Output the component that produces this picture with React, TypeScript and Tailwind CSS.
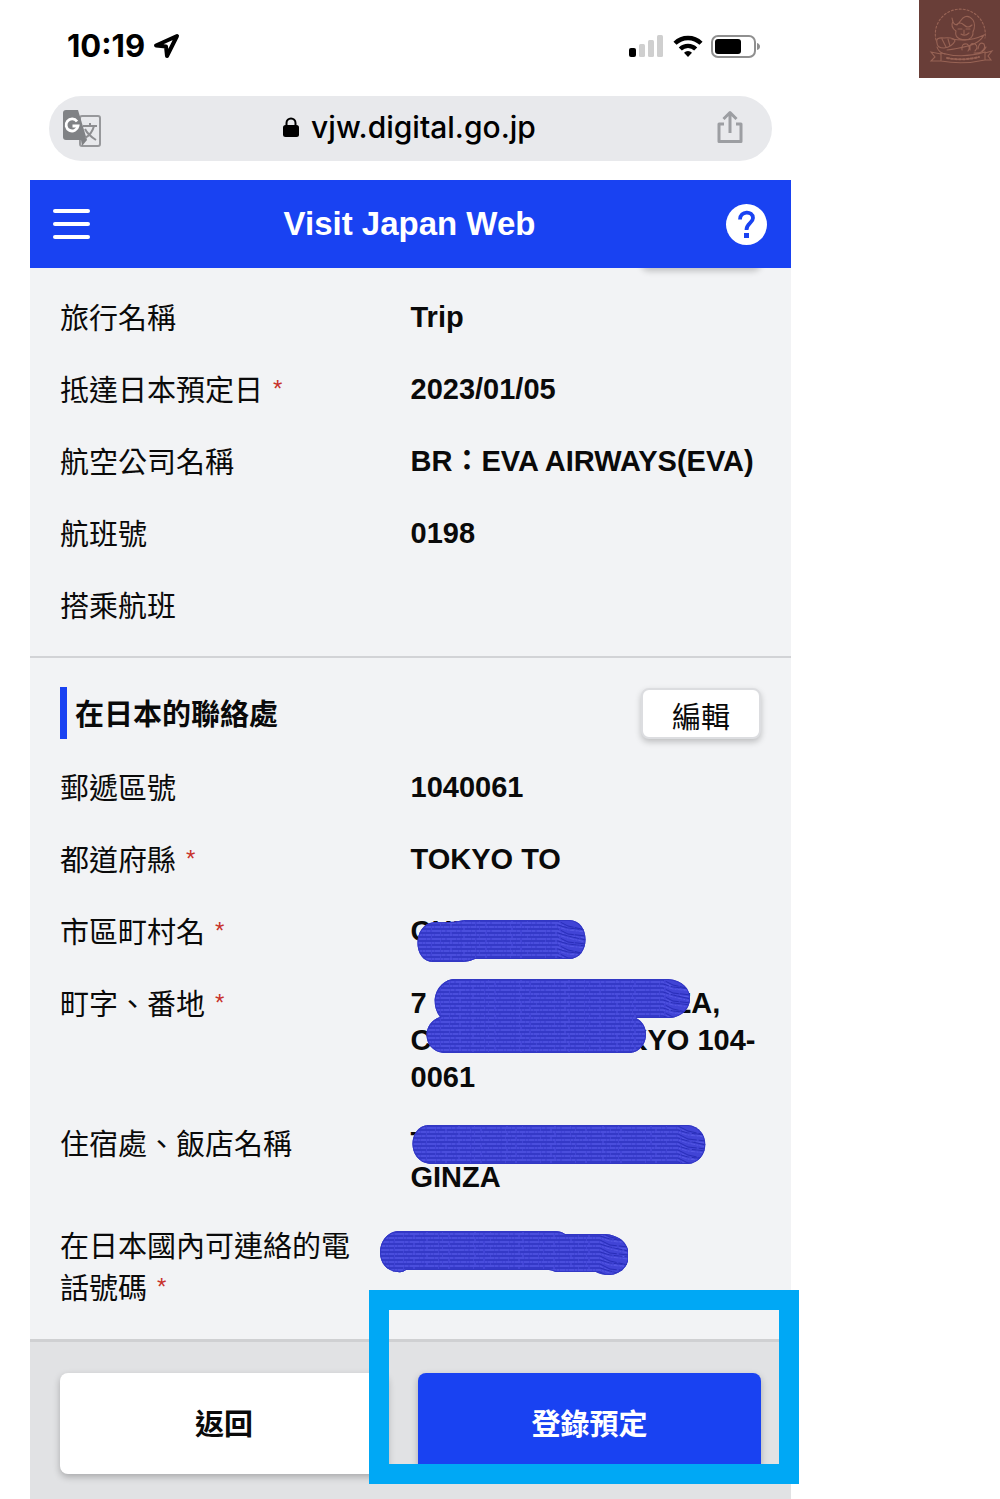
import { useId, type ReactNode } from "react";

function Required() {
  return <span className="ml-[10px] align-[4px] font-['Liberation_Sans'] text-2xl leading-none text-[#c8322b]">*</span>;
}

type StrokeProps = { d: string; width: number; height: number; className: string };

/* A marker stroke with a ribbed texture that hides private data. */
function Scribble({ d, width, height, className }: StrokeProps) {
  const id = useId();
  const rows = Array.from({ length: Math.ceil(height / 4) }, (_, i) => i * 4 + 2);
  return (
    <svg className={`absolute ${className}`} width={width} height={height} viewBox={`0 0 ${width} ${height}`} aria-hidden="true">
      <defs>
        <clipPath id={id}>
          <path d={d} />
        </clipPath>
      </defs>
      <path d={d} fill="#4144d6" />
      <g clipPath={`url(#${id})`} fill="none" strokeWidth="1">
        {rows.map((y, i) => {
          const bend = width - 28;
          const line = `M0 ${y}H${bend}l10 ${i % 2 ? 3 : 5}l18 ${i % 3 ? 2 : 4}`;
          return (
            <g key={y}>
              <path d={line} stroke="#292eb8" strokeDasharray={i % 2 ? "23 1 9 2" : "14 1 31 2"} />
              <path d={line} transform="translate(0 2)" stroke="#5558e4" strokeDasharray={i % 2 ? "5 1 2 1" : "9 1 3 2"} />
            </g>
          );
        })}
        <path d={d} stroke="#3237c4" strokeWidth="2" />
      </g>
    </svg>
  );
}

type RowProps = { label: string; required?: boolean; children?: ReactNode; className?: string; lines?: string };

function Row({ label, required, children, className = "mb-8", lines = "leading-[37px]" }: RowProps) {
  return (
    <div className={`grid grid-cols-2 items-start ${className}`}>
      <dt className="leading-10">
        {label}
        {required && <Required />}
      </dt>
      <dd className={`relative font-bold whitespace-nowrap ${lines}`}>{children}</dd>
    </div>
  );
}

function StatusBar() {
  return (
    <div className="flex h-24 items-start justify-between pt-7 pr-[30px] pl-[37px] text-black">
      <div className="flex items-center gap-2 font-[Inter] text-[31px] leading-9 font-bold">
        <time>10:19</time>
        <svg width="27" height="26" viewBox="0 0 27 26" fill="none" stroke="black" strokeWidth="4" strokeLinejoin="round" aria-hidden="true">
          <path d="M24 3 3 12.5 13 13.5 14 23Z" />
        </svg>
      </div>
      <div className="flex h-9 items-center gap-2">
        <svg width="36" height="22" viewBox="0 0 36 22" aria-hidden="true">
          <rect x="0" y="13" width="7" height="9" rx="2" fill="black" />
          <rect x="10" y="9" width="6" height="13" rx="1.5" fill="#cfcfcf" />
          <rect x="19" y="5" width="6" height="17" rx="1.5" fill="#cfcfcf" />
          <rect x="28" y="0" width="6" height="22" rx="1.5" fill="#cfcfcf" />
        </svg>
        <svg width="30" height="22" viewBox="0 0 30 22" fill="none" stroke="black" strokeWidth="4.4" aria-hidden="true">
          <path d="M2 8.3a18.5 18.5 0 0 1 26 0" />
          <path d="M7.3 14a11 11 0 0 1 15.4 0" />
          <path d="M11 17.7a5.7 5.7 0 0 1 8 0L15 22Z" fill="black" stroke="none" />
        </svg>
        <svg width="50" height="23" viewBox="0 0 50 23" aria-hidden="true">
          <rect x="1" y="1" width="43" height="21" rx="6" fill="none" stroke="#8f8f8f" strokeWidth="2" />
          <rect x="4" y="4" width="26" height="15" rx="3" fill="black" />
          <path d="M46 8q3 1 3 3.5T46 15Z" fill="#8f8f8f" />
        </svg>
      </div>
    </div>
  );
}

function AddressBar() {
  return (
    <div className="mr-[19px] ml-[19px] flex h-[65px] items-center justify-between rounded-full bg-[#e8e9ec] pr-[28px] pl-[14px]">
      <button type="button" aria-label="Translate">
        <svg width="40" height="40" viewBox="0 0 40 40" aria-hidden="true">
          <rect x="17" y="7" width="20" height="30" rx="2" fill="#e8e9ec" stroke="#97989b" strokeWidth="2" />
          <path d="M3 1H15L24 31H3Q0 31 0 28V4Q0 1 3 1Z" fill="#808285" />
          <path d="M18 31H24L19 37Z" fill="#808285" />
          <path d="M14 12.5A6 6 0 1 0 15 17H9.5" fill="none" stroke="white" strokeWidth="2.8" />
          <g fill="none" stroke="#8d8e91" strokeWidth="2">
            <path d="M20 17H34M27 14V17M31 17Q29 25 22 29M22 20Q25 26 33 31" />
          </g>
        </svg>
      </button>
      <div className="flex items-center gap-3 pb-1 font-[Inter] text-[30px] leading-9 font-medium text-black">
        <svg width="16" height="20" viewBox="0 0 16 20" aria-hidden="true">
          <rect x="0" y="8" width="16" height="12" rx="2.5" fill="black" />
          <path d="M3.500 9V6a4.500 4.500 0 0 1 9 0V9" fill="none" stroke="black" strokeWidth="2" />
        </svg>
        <span>vjw.digital.go.jp</span>
      </div>
      <button type="button" aria-label="Share" className="pb-1">
        <svg width="28" height="34" viewBox="0 0 28 34" fill="none" stroke="#9c9ea2" strokeWidth="3" strokeLinejoin="round" aria-hidden="true">
          <path d="M8 14H3V31.500H25V14H20M14 23V3M7.500 9 14 2.500 20.500 9" />
        </svg>
      </button>
    </div>
  );
}

function Emblem() {
  return (
    <svg className="absolute top-0 right-0" width="81" height="78" viewBox="0 0 81 78" role="img" aria-label="Bakery emblem">
      <rect width="81" height="78" fill="#693e38" />
      <g fill="none" stroke="#a8705f" strokeWidth="1.100" strokeLinecap="round" opacity="0.75">
        <path d="M17 40A25 25 0 1 1 66 38" strokeDasharray="2 2" />
        <path d="M33 18Q34 25 38 25L44 18Q49 14 54 20Q57 25 54 32M34 21Q31 27 37 31M37 25Q41 21 45 25T53 25M37 31Q35 39 46 40Q55 39 54 31M39 29H43M47 29H51M42 34Q46 37 50 33M45 30V34" />
        <path d="M18 43Q16 37 25 38Q35 37 36 41Q33 47 25 48Q18 48 18 43ZM23 39 27 47M29 39 31 46" />
        <path d="M33 39Q51 42 65 35Q61 43 49 46Q37 49 28 50M43 50Q42 43 48 44Q52 47 49 51M51 50Q50 42 56 44Q60 47 56 51M59 49Q60 41 65 44Q67 48 63 51M18 47Q19 52 26 54M55 53Q64 54 67 47" />
        <path d="M22 53Q44 59 66 52V60Q44 65 22 61ZM22 54 12 52 16 57 12 61 22 61M66 53 73 51 69 56 72 60 66 60" />
        <path d="M28 58Q44 61 60 57" strokeWidth="2" strokeDasharray="2 2" />
      </g>
    </svg>
  );
}

export default function App() {
  return (
    <div className="relative min-h-screen overflow-hidden bg-white font-['Liberation_Sans','Noto_Sans_CJK_TC',sans-serif]">
      <Emblem />
      <div className="mr-[209px] ml-[30px] text-[29px] text-[#0a0a0a]">
        <StatusBar />
        <AddressBar />
        <header className="mt-[19px] flex h-[88px] items-center justify-between bg-[#1942f2] pr-6 pl-[23px] text-white">
          <button type="button" aria-label="Menu" className="flex w-10 flex-col gap-[9px]">
            <span className="h-1 w-[37px] rounded-full bg-white" />
            <span className="h-1 w-[37px] rounded-full bg-white" />
            <span className="h-1 w-[37px] rounded-full bg-white" />
          </button>
          <h1 className="text-[33px] leading-10 font-bold">Visit Japan Web</h1>
          <button type="button" aria-label="Help">
            <svg width="41" height="41" viewBox="0 0 41 41" aria-hidden="true">
              <circle cx="20.500" cy="20.500" r="20.500" fill="white" />
              <path d="M14 15.500C14 6.500 27 6.500 27 14C27 19 20.500 19 20.500 26" fill="none" stroke="#1942f2" strokeWidth="3.800" />
              <rect x="18" y="29" width="5" height="5" fill="#1942f2" />
            </svg>
          </button>
        </header>

        <main className="bg-[#f2f3f5]">
          <div className="h-[31px] overflow-hidden">
            <div className="-mt-10 mr-[30px] ml-auto h-10 w-[120px] rounded-lg bg-white shadow-[0_3px_6px_rgba(0,0,0,0.22)]" />
          </div>
          <dl className="border-b-2 border-[#d2d3d6] px-[30px] pb-[29px]">
            <Row label="旅行名稱">Trip</Row>
            <Row label="抵達日本預定日" required>2023/01/05</Row>
            <Row label="航空公司名稱">BR：EVA AIRWAYS(EVA)</Row>
            <Row label="航班號">0198</Row>
            <Row label="搭乘航班" className="" />
          </dl>

          <section className="px-[30px] pt-[29px]">
            <div className="mb-[30px] flex items-center justify-between">
              <h2 className="border-l-[7px] border-[#1942f2] pt-1 pl-2 leading-[48px] font-bold">在日本的聯絡處</h2>
              <button type="button" className="h-[51px] w-[120px] rounded-lg border-2 border-[#dcdde0] bg-white pt-2 leading-10 shadow-[0_3px_6px_rgba(0,0,0,0.22)]">
                編輯
              </button>
            </div>
            <dl>
              <Row label="郵遞區號">1040061</Row>
              <Row label="都道府縣" required>TOKYO TO</Row>
              <Row label="市區町村名" required>
                CHUO
                <Scribble
                  className="top-[6px] left-[6px]"
                  width={169}
                  height={44}
                  d="M18 3Q34 4 48 1H152C174 1 174 40 152 40H58Q52 43 46 43H16C-5 43-5 4 18 3Z"
                />
              </Row>
              <Row label="町字、番地" required className="mb-[29px]">
                <div className="flex">
                  <span className="w-[263px]">7</span>
                  <span>ZA,</span>
                </div>
                <div className="flex">
                  <span className="w-[216px]">C</span>
                  <span>KYO 104-</span>
                </div>
                <div>0061</div>
                <Scribble
                  className="-top-[7px] left-[15px]"
                  width={265}
                  height={77}
                  d="M28 1H242C272 3 270 38 244 40H210C226 48 222 73 204 75H18C-4 73-5 45 14 39C2 23 12 2 28 1Z"
                />
              </Row>
              <Row label="住宿處、飯店名稱" className="mb-[31px]" lines="leading-[35px]">
                <div>T</div>
                <div>GINZA</div>
                <Scribble
                  className="-top-px left-px"
                  width={294}
                  height={41}
                  d="M16 1H276C299 3 299 38 276 40H18C-5 38-5 3 16 1Z"
                />
              </Row>
              <div className="grid grid-cols-2 pb-[29px]">
                <dt className="leading-[42px] whitespace-nowrap">
                  在日本國內可連絡的電
                  <br />
                  話號碼
                  <Required />
                </dt>
                <dd className="relative">
                  <Scribble
                    className="top-[4px] -left-[31px]"
                    width={248}
                    height={46}
                    d="M18 1H174Q181 1 185 4H225C257 6 255 43 230 45Q221 45 216 42H176Q171 40 169 40H26Q22 43 18 42C-7 41-5 3 18 1Z"
                  />
                </dd>
              </div>
            </dl>
          </section>

          <footer className="grid grid-cols-[328fr_343fr] gap-[30px] border-t-[3px] border-[#cfd0d2] bg-[#e1e2e4] px-[30px] pt-[31px] pb-[25px]">
            <button type="button" className="h-[101px] rounded-lg bg-white pt-1 font-bold shadow-[0_3px_7px_rgba(0,0,0,0.25)]">
              返回
            </button>
            <div className="relative">
              <button type="button" className="h-[101px] w-full rounded-lg bg-[#1942f2] pt-1 font-bold text-white shadow-[0_3px_7px_rgba(0,0,0,0.25)]">
                登錄預定
              </button>
              <div className="pointer-events-none absolute -top-[83px] -right-[38px] -bottom-[10px] -left-[49px] border-[20px] border-[#00a8f5]" />
            </div>
          </footer>
        </main>
      </div>
    </div>
  );
}
